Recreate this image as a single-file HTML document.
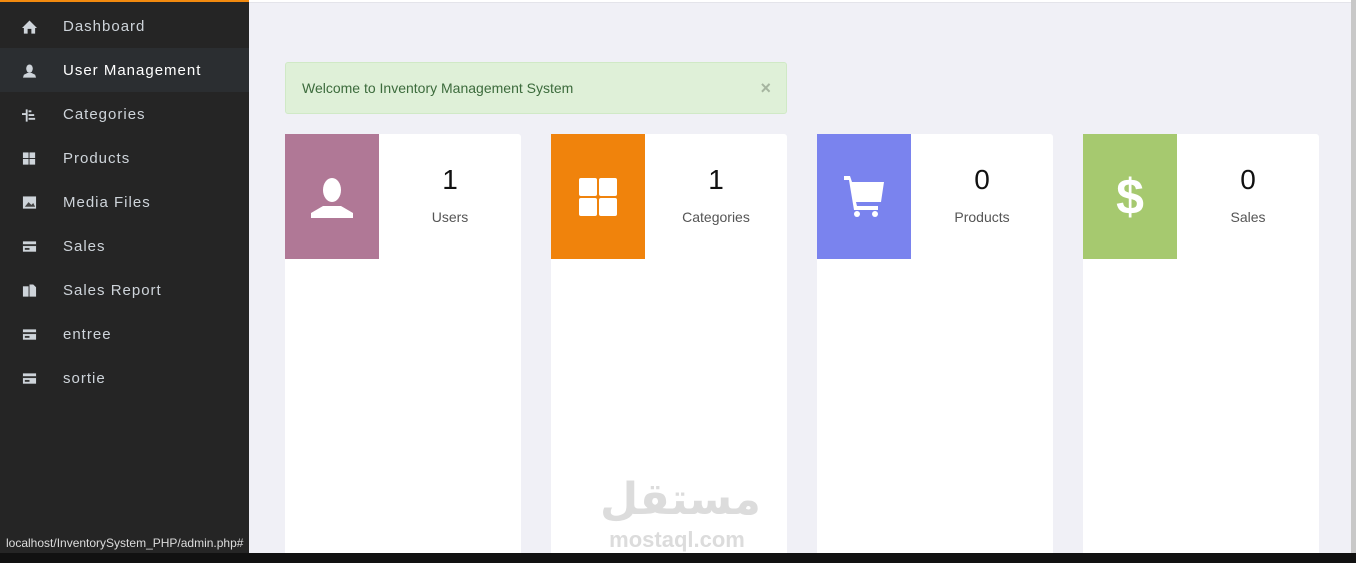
<!DOCTYPE html>
<html><head><meta charset="utf-8"><style>
*{margin:0;padding:0;box-sizing:border-box}
body{width:1356px;height:563px;overflow:hidden;background:#f0f0f6;font-family:"Liberation Sans",sans-serif;position:relative}
.side{position:absolute;left:0;top:0;width:249px;height:553px;background:#252525;border-top:2px solid #f28a0f}
.item{position:absolute;left:0;width:249px;height:44px;color:#ced4da;font-size:15px;letter-spacing:1px;line-height:46px}
.item span{position:absolute;left:63px}
.item svg{position:absolute;left:22px;top:16px}
.act{background:#2b2e31;color:#fff}
.topbar{position:absolute;left:249px;top:0;width:1102px;height:3px;background:#fff;border-bottom:1px solid #e4e4ea}
.sb{position:absolute;left:1351px;top:0;width:5px;height:553px;background:#c8c8c8}
.alert{position:absolute;left:285px;top:62px;width:502px;height:52px;background:#dff0d8;border:1px solid #d0e9c6;border-radius:3px;color:#3c6b3c;font-size:14px;line-height:50px;padding-left:16px}
.alert b{position:absolute;right:15px;top:0;color:#a6b5a0;font-size:18px}
.card{position:absolute;top:134px;width:236px;height:419px;background:#fff;border-radius:3px 3px 0 0}
.ic{position:absolute;left:0;top:0;width:94px;height:125px;display:flex;align-items:center;justify-content:center}
.num{position:absolute;left:94px;right:0;text-align:center;font-size:28px;color:#111}
.lab{position:absolute;left:94px;right:0;text-align:center;font-size:14px;color:#555}
.task{position:absolute;left:0;top:553px;width:1356px;height:10px;background:#111}
.status{position:absolute;left:0;top:534px;height:19px;padding:0 6px;background:#252525;color:#ddd;font-size:12px;line-height:19px;border-top-right-radius:3px}
.wm{position:absolute;left:600px;top:472px;color:#dcdcdc;text-align:center;width:154px;font-weight:bold}
.wm .ar{font-family:"DejaVu Sans",sans-serif;font-size:44px;line-height:56px;display:block}
.wm .en{font-size:22px;line-height:24px;display:block}
</style></head><body>
<div class="side">
<div class="item" style="top:2px"><svg width="15" height="14" viewBox="0 0 16 14"><path d="M8 0L0 8h2v6h4V9h4v5h4V8h2z" fill="#ced4da"/></svg><span>Dashboard</span></div>
<div class="item act" style="top:46px"><svg width="15" height="14" viewBox="0 0 16 14"><ellipse cx="8" cy="4.5" rx="3.5" ry="4.5" fill="#ced4da"/><path d="M1 14l1-3 4-2h4l4 2 1 3z" fill="#ced4da"/></svg><span>User Management</span></div>
<div class="item" style="top:90px"><svg width="15" height="14" viewBox="0 0 16 14"><path d="M0 6h5M5 1v13M7 3h3M7 7h6M7 11h7" stroke="#ced4da" stroke-width="2"/></svg><span>Categories</span></div>
<div class="item" style="top:134px"><svg width="15" height="14" viewBox="0 0 16 14"><rect x="1" y="0" width="6" height="6" fill="#ced4da"/><rect x="8" y="0" width="6" height="6" fill="#ced4da"/><rect x="1" y="7" width="6" height="6" fill="#ced4da"/><rect x="8" y="7" width="6" height="6" fill="#ced4da"/></svg><span>Products</span></div>
<div class="item" style="top:178px"><svg width="15" height="14" viewBox="0 0 16 14"><rect x="1" y="0" width="14" height="13" fill="#ced4da"/><path d="M3 11l4-5 3 3 2-2 2 4z" fill="#444"/></svg><span>Media Files</span></div>
<div class="item" style="top:222px"><svg width="15" height="14" viewBox="0 0 16 14"><rect x="1" y="1" width="14" height="11" fill="#ced4da"/><rect x="1" y="4" width="14" height="2" fill="#333"/><rect x="3" y="8" width="5" height="2" fill="#333"/></svg><span>Sales</span></div>
<div class="item" style="top:266px"><svg width="15" height="14" viewBox="0 0 16 14"><rect x="1" y="2" width="6" height="11" fill="#ced4da"/><path d="M8 0h4l3 3v10H8z" fill="#ced4da"/></svg><span>Sales Report</span></div>
<div class="item" style="top:310px"><svg width="15" height="14" viewBox="0 0 16 14"><rect x="1" y="1" width="14" height="11" fill="#ced4da"/><rect x="1" y="4" width="14" height="2" fill="#333"/><rect x="3" y="8" width="5" height="2" fill="#333"/></svg><span>entree</span></div>
<div class="item" style="top:354px"><svg width="15" height="14" viewBox="0 0 16 14"><rect x="1" y="1" width="14" height="11" fill="#ced4da"/><rect x="1" y="4" width="14" height="2" fill="#333"/><rect x="3" y="8" width="5" height="2" fill="#333"/></svg><span>sortie</span></div>
</div>
<div class="status">localhost/InventorySystem_PHP/admin.php#</div>
<div class="topbar"></div>
<div class="sb"></div>
<div class="alert">Welcome to Inventory Management System<b>×</b></div>

<div class="card" style="left:285px"><div class="ic" style="background:#b07896"><svg width="42" height="42" viewBox="0 0 42 42"><ellipse cx="21" cy="14" rx="9" ry="12" fill="#fff"/><path d="M0 42v-5l12-7h18l12 7v5z" fill="#fff"/></svg></div><div class="num" style="top:30px">1</div><div class="lab" style="top:75px">Users</div></div>
<div class="card" style="left:551px"><div class="ic" style="background:#f0830c"><svg width="38" height="38" viewBox="0 0 38 38"><rect x="0" y="0" width="18" height="18" rx="2" fill="#fff"/><rect x="20" y="0" width="18" height="18" rx="2" fill="#fff"/><rect x="0" y="20" width="18" height="18" rx="2" fill="#fff"/><rect x="20" y="20" width="18" height="18" rx="2" fill="#fff"/></svg></div><div class="num" style="top:30px">1</div><div class="lab" style="top:75px">Categories</div></div>
<div class="card" style="left:817px"><div class="ic" style="background:#7a83ee"><svg width="40" height="42" viewBox="0 0 40 42"><path d="M0 0h6l2 6h32l-3 20H12l1 4h21v4H10L5 4H0z" fill="#fff"/><circle cx="13" cy="38" r="3" fill="#fff"/><circle cx="31" cy="38" r="3" fill="#fff"/></svg></div><div class="num" style="top:30px">0</div><div class="lab" style="top:75px">Products</div></div>
<div class="card" style="left:1083px"><div class="ic" style="background:#a6c96f;color:#fff;font-size:50px;font-weight:bold">$</div><div class="num" style="top:30px">0</div><div class="lab" style="top:75px">Sales</div></div>

<div class="wm"><span class="ar">مستقل</span><span class="en">mostaql.com</span></div>
<div class="task"></div>
</body></html>
